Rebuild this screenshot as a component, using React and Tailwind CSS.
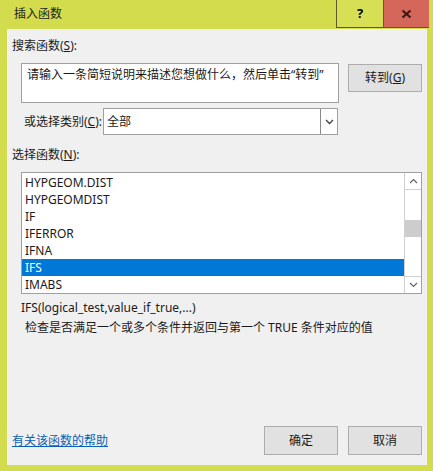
import React from 'react';

const font = { fontFamily: '"Noto Sans", "Noto Sans CJK SC", sans-serif' };

const items = ['HYPGEOM.DIST', 'HYPGEOMDIST', 'IF', 'IFERROR', 'IFNA', 'IFS', 'IMABS'];

function Btn({ children, className = '' }) {
  return (
    <div className={`flex items-center justify-center border border-[#adadad] bg-[#e1e1e1] text-[12px] text-[#1a1a1a] ${className}`}>
      {children}
    </div>
  );
}

export default function App() {
  return (
    <div className="w-[433px] h-[471px] bg-[#d3dc4c] flex flex-col text-[#1a1a1a]" style={font}>
      {/* title bar */}
      <div className="h-[29px] flex items-start shrink-0">
        <div className="pl-[14px] pt-[5px] text-[12px] leading-[18px] text-[#222]">插入函数</div>
        <div className="ml-auto flex mr-[4px]">
          <div className="w-[47px] h-[28px] border-l border-b border-[#5a5d2a] bg-[#d7df55] flex items-center justify-center text-[13px] font-bold text-black">?</div>
          <div className="w-[46px] h-[28px] border-l border-b border-[#5a5d2a] bg-[#d4665a] flex items-center justify-center">
            <svg width="11" height="10" viewBox="0 0 11 10">
              <path d="M1.5 1.5 L9.5 8.5 M9.5 1.5 L1.5 8.5" stroke="#3a1a14" strokeWidth="2.2" />
            </svg>
          </div>
        </div>
      </div>

      {/* body */}
      <div className="ml-[7px] mr-[6px] h-[436px] bg-[#f0f0f0] flex flex-col text-[12px]">
        <div className="mt-[9px] ml-[5px] leading-[16px]">搜索函数(<u>S</u>):</div>

        <div className="mt-[9px] flex items-start">
          <div className="ml-[14px] w-[318px] h-[40px] bg-white border border-[#a0a0a0] px-[5px] pt-[3px] leading-[16px] text-[12px]">
            请输入一条简短说明来描述您想做什么，然后单击“转到”
          </div>
          <Btn className="ml-[9px] mt-[1px] w-[74px] h-[28px]">转到(<u>G</u>)</Btn>
        </div>

        <div className="mt-[5px] flex items-center h-[27px]">
          <div className="w-[96px] text-right pr-[1px] leading-[16px]">或选择类别(<u>C</u>):</div>
          <div className="w-[235px] h-[27px] bg-white border border-[#a0a0a0] flex items-stretch">
            <div className="flex-1 pl-[3px] flex items-center">全部</div>
            <div className="w-[17px] border-l border-[#8a8a8a] flex items-center justify-center">
              <svg width="9" height="6" viewBox="0 0 9 6">
                <path d="M1 1 L4.5 4.5 L8 1" stroke="#444" strokeWidth="1.4" fill="none" />
              </svg>
            </div>
          </div>
        </div>

        <div className="mt-[12px] ml-[5px] leading-[16px]">选择函数(<u>N</u>):</div>

        <div className="mt-[9px] ml-[14px] w-[401px] h-[122px] bg-white border border-[#a0a0a0] flex">
          <div className="flex-1 pt-[1px] overflow-hidden">
            {items.map((it) => (
              <div
                key={it}
                className={`h-[17px] leading-[17px] pl-[3px] text-[12px] ${it === 'IFS' ? 'bg-[#0078d7] text-white' : ''}`}
              >
                {it}
              </div>
            ))}
          </div>
          <div className="w-[17px] border-l border-[#d0d0d0] flex flex-col">
            <div className="h-[17px] border-b border-[#d0d0d0] flex items-center justify-center">
              <svg width="9" height="6" viewBox="0 0 9 6">
                <path d="M1 5 L4.5 1.5 L8 5" stroke="#606060" strokeWidth="1.1" fill="none" />
              </svg>
            </div>
            <div className="flex-1 flex flex-col">
              <div className="h-[30px]" />
              <div className="h-[17px] bg-[#cdcdcd]" />
            </div>
            <div className="h-[17px] border-t border-[#d0d0d0] flex items-center justify-center">
              <svg width="9" height="6" viewBox="0 0 9 6">
                <path d="M1 1 L4.5 4.5 L8 1" stroke="#606060" strokeWidth="1.1" fill="none" />
              </svg>
            </div>
          </div>
        </div>

        <div className="mt-[6px] ml-[14px] leading-[16px]">IFS(logical_test,value_if_true,...)</div>
        <div className="mt-[4px] ml-[18px] leading-[16px]">检查是否满足一个或多个条件并返回与第一个 TRUE 条件对应的值</div>

        <div className="mt-auto mb-[10px] flex items-center">
          <div className="ml-[5px] text-[#0b5fb5] underline leading-[16px]">有关该函数的帮助</div>
          <Btn className="ml-auto w-[74px] h-[29px]">确定</Btn>
          <Btn className="ml-[10px] mr-[5px] w-[74px] h-[29px]">取消</Btn>
        </div>
      </div>
    </div>
  );
}
